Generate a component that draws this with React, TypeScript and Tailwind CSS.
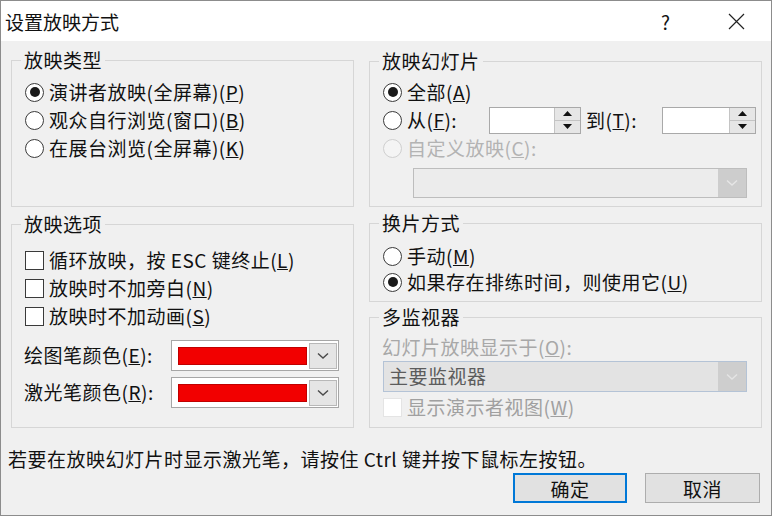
import React from "react";

// Windows-style "设置放映方式" dialog
function Radio({ checked = false, disabled = false }: { checked?: boolean; disabled?: boolean }) {
  return (
    <span
      className={`flex h-[19px] w-[19px] shrink-0 items-center justify-center rounded-full border ${
        disabled ? "border-[#cfcfcf] bg-[#f4f4f4]" : "border-[#3a3a3a] bg-white"
      }`}
    >
      {checked && <span className="h-[10px] w-[10px] rounded-full bg-[#1a1a1a]" />}
    </span>
  );
}

function Check({ disabled = false }: { disabled?: boolean }) {
  return (
    <span
      className={`block h-[19px] w-[19px] shrink-0 border ${
        disabled ? "border-[#e4e4e4] bg-white" : "border-[#3a3a3a] bg-white"
      }`}
    />
  );
}

function Chevron({ color }: { color: string }) {
  return (
    <svg width="12" height="8" viewBox="0 0 12 8" fill="none">
      <path d="M1 1.5 L6 6 L11 1.5" stroke={color} strokeWidth="1.4" />
    </svg>
  );
}

function Tri({ up }: { up?: boolean }) {
  return (
    <svg width="9" height="5" viewBox="0 0 9 5">
      <path d={up ? "M4.5 0 L9 5 L0 5 Z" : "M0 0 L9 0 L4.5 5 Z"} fill="#111" />
    </svg>
  );
}

function SpinBox({ w }: { w: string }) {
  return (
    <div className={`flex h-[27px] ${w} border border-[#a9a9a9] bg-white`}>
      <div className="flex-1" />
      <div className="flex w-[26px] flex-col border-l border-[#c4c4c4]">
        <div className="flex flex-1 items-center justify-center border-b border-[#c4c4c4] bg-[#e6e6e6]">
          <Tri up />
        </div>
        <div className="flex flex-1 items-center justify-center bg-[#e6e6e6]">
          <Tri />
        </div>
      </div>
    </div>
  );
}

function ColorCombo() {
  return (
    <div className="flex h-[31px] w-[168px] items-center border border-[#a6a6a6] bg-white pl-[6px] pr-[1px]">
      <div className="h-[18px] w-[129px] border border-[#c00000] bg-[#f20000]" />
      <div className="ml-auto flex h-[26px] w-[28px] items-center justify-center border border-[#b8b8b8] bg-[#e5e5e5]">
        <Chevron color="#4a4a4a" />
      </div>
    </div>
  );
}

const legend = "ml-[9px] px-[3px] leading-[24px]";
const fs = "border border-[#d6d6d6]";

export default function App() {
  return (
    <div className="flex h-[516px] w-[772px] flex-col overflow-hidden border border-[#8c8c8c] bg-[#f0f0f0] font-['Noto_Sans_CJK_SC',sans-serif] text-[19px] tracking-[0.5px] text-[#111]">
      {/* title bar */}
      <div className="flex h-[40px] shrink-0 items-center bg-white pl-[4px] pr-[26px] tracking-normal">
        <span className="text-[19px] leading-none">设置放映方式</span>
        <span className="ml-auto mr-[58px] text-[19px] leading-none">?</span>
        <svg width="17" height="17" viewBox="0 0 17 17">
          <path d="M1 1 L16 16 M16 1 L1 16" stroke="#222" strokeWidth="1.2" />
        </svg>
      </div>

      <div className="flex pl-[10px] pr-[9px]">
        {/* left column */}
        <div className="flex w-[343px] flex-col">
          <fieldset className={`${fs} mt-[7px] h-[159px]`}>
            <legend className={legend}>放映类型</legend>
            <div className="mt-[6px] flex flex-col pl-[13px]">
              <div className="flex h-[28px] items-center gap-[5px]">
                <Radio checked />
                <span>演讲者放映(全屏幕)(<u>P</u>)</span>
              </div>
              <div className="flex h-[28px] items-center gap-[5px]">
                <Radio />
                <span>观众自行浏览(窗口)(<u>B</u>)</span>
              </div>
              <div className="flex h-[28px] items-center gap-[5px]">
                <Radio />
                <span>在展台浏览(全屏幕)(<u>K</u>)</span>
              </div>
            </div>
          </fieldset>

          <fieldset className={`${fs} mt-[5px] h-[216px]`}>
            <legend className={legend}>放映选项</legend>
            <div className="mt-[10px] flex flex-col pl-[13px]">
              <div className="flex h-[28px] items-center gap-[5px]">
                <Check />
                <span>循环放映，按 ESC 键终止(<u>L</u>)</span>
              </div>
              <div className="flex h-[28px] items-center gap-[5px]">
                <Check />
                <span>放映时不加旁白(<u>N</u>)</span>
              </div>
              <div className="flex h-[28px] items-center gap-[5px]">
                <Check />
                <span>放映时不加动画(<u>S</u>)</span>
              </div>
            </div>
            <div className="mt-[10px] flex flex-col gap-[6px] pl-[12px]">
              <div className="flex items-center">
                <span className="w-[147px]">绘图笔颜色(<u>E</u>):</span>
                <ColorCombo />
              </div>
              <div className="flex items-center">
                <span className="w-[147px]">激光笔颜色(<u>R</u>):</span>
                <ColorCombo />
              </div>
            </div>
          </fieldset>
        </div>

        {/* right column */}
        <div className="ml-[15px] flex w-[393px] flex-col">
          <fieldset className={`${fs} mt-[8px] h-[158px]`}>
            <legend className={legend}>放映幻灯片</legend>
            <div className="mt-[5px] flex flex-col pl-[13px]">
              <div className="flex h-[28px] items-center gap-[5px]">
                <Radio checked />
                <span>全部(<u>A</u>)</span>
              </div>
              <div className="flex h-[28px] items-center gap-[5px]">
                <Radio />
                <span className="w-[77px]">从(<u>F</u>):</span>
                <SpinBox w="w-[92px]" />
                <span className="w-[71px]">到(<u>T</u>):</span>
                <SpinBox w="w-[94px]" />
              </div>
              <div className="flex h-[28px] items-center gap-[5px] text-[#b3b3b3]">
                <Radio disabled />
                <span>自定义放映(<u>C</u>):</span>
              </div>
            </div>
            <div className="ml-[43px] mr-[14px] mt-[6px] flex h-[30px] border border-[#bdbdbd] bg-[#ececec]">
              <div className="flex-1" />
              <div className="flex w-[28px] items-center justify-center bg-[#cdcdcd]">
                <Chevron color="#e6e6e6" />
              </div>
            </div>
          </fieldset>

          <fieldset className={`${fs} mt-[4px] h-[91px]`}>
            <legend className={legend}>换片方式</legend>
            <div className="mt-[8px] flex flex-col pl-[13px]">
              <div className="flex h-[26px] items-center gap-[5px]">
                <Radio />
                <span>手动(<u>M</u>)</span>
              </div>
              <div className="flex h-[26px] items-center gap-[5px]">
                <Radio checked />
                <span>如果存在排练时间，则使用它(<u>U</u>)</span>
              </div>
            </div>
          </fieldset>

          <fieldset className={`${fs} mt-[3px] h-[123px]`}>
            <legend className={legend}>多监视器</legend>
            <div className="mt-[5px] flex h-[26px] items-center pl-[12px] text-[#a8a8a8]">
              幻灯片放映显示于(<u>O</u>):
            </div>
            <div className="ml-[13px] mr-[14px] mt-[1px] flex h-[31px] items-center border border-[#b4c3d6] bg-[#e3e3e3]">
              <span className="pl-[5px] text-[#5c5c5c]">主要监视器</span>
              <div className="ml-auto flex h-full w-[28px] items-center justify-center bg-[#cecece]">
                <Chevron color="#e4e4e4" />
              </div>
            </div>
            <div className="mt-[2px] flex h-[26px] items-center gap-[5px] pl-[13px] text-[#a0a0a0]">
              <Check disabled />
              <span>显示演示者视图(<u>W</u>)</span>
            </div>
          </fieldset>
        </div>
      </div>

      {/* footer */}
      <div className="mt-[18px] pl-[7px] leading-[26px]">
        若要在放映幻灯片时显示激光笔，请按住 Ctrl 键并按下鼠标左按钮。
      </div>
      <div className="mt-[1px] flex justify-end gap-[18px] pr-[11px]">
        <button className="h-[30px] w-[114px] border-2 border-[#0078d7] bg-[#e1e1e1] text-[19px] leading-none">
          确定
        </button>
        <button className="h-[30px] w-[115px] border border-[#adadad] bg-[#e1e1e1] text-[19px] leading-none">
          取消
        </button>
      </div>
    </div>
  );
}
